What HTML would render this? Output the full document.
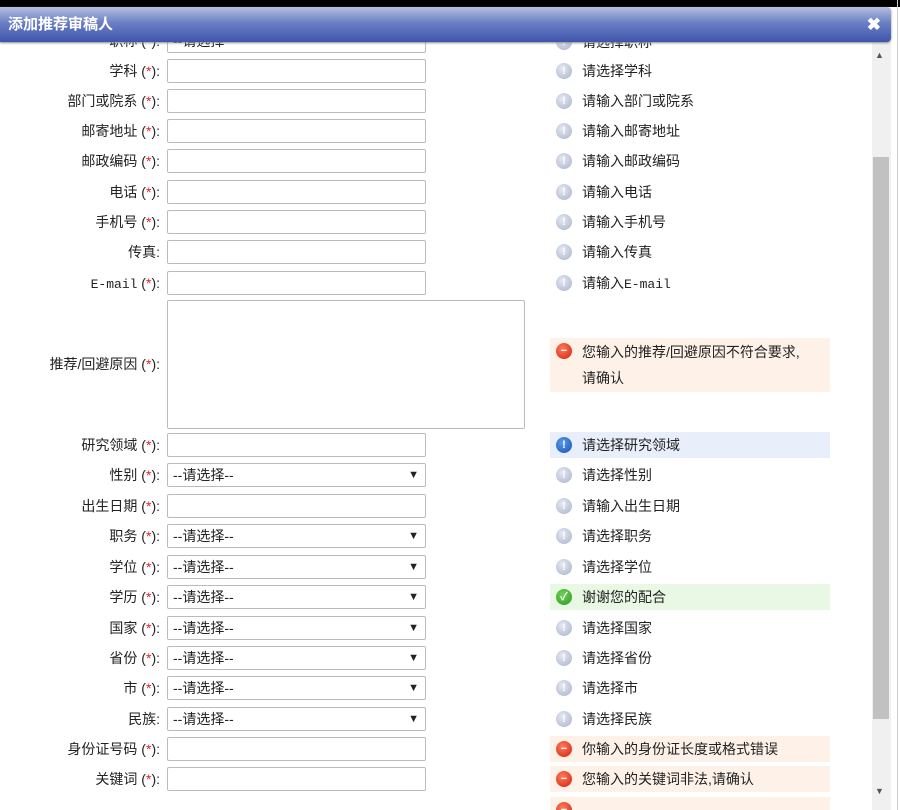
<!DOCTYPE html>
<html><head><meta charset="utf-8"><style>
*{margin:0;padding:0;box-sizing:border-box}
html{width:900px;height:810px;overflow:hidden}
body{width:900px;height:810px;overflow:hidden;background:#fff;font-family:"Liberation Sans","Noto Sans CJK SC",sans-serif;font-size:14px;color:#222;position:relative}
.top{position:absolute;left:0;top:0;width:900px;height:7px;background:#000}
.title{position:absolute;left:0;top:7px;width:891px;height:35px;background:linear-gradient(#b5c0e0,#6b7fc4 45%,#3d55ac);border-radius:0 4px 4px 0;color:#fff;font-weight:bold;font-size:15px;line-height:35px;padding-left:8px;z-index:5;box-shadow:0 1px 2px #888}
.x{position:absolute;right:10px;top:0;font-size:17px;color:#fff}
.rowl{position:absolute;left:0;width:160px;text-align:right;height:20px;line-height:20px;white-space:nowrap}
.rowl i{font-style:normal;color:#d22}
.in{position:absolute;left:167px;width:259px;height:24px;border:1px solid #bbb;border-radius:2px;background:#fff;font-size:14px;line-height:22px;padding-left:5px}
.in b{position:absolute;right:6px;top:0;font-size:11px;font-weight:normal}
.m{position:absolute;left:550px;width:280px;height:26px;line-height:26px;padding-left:32px;white-space:nowrap}
.ic{position:absolute;left:6px;top:5px;width:16px;height:16px;border-radius:50%;background:radial-gradient(circle at 40% 35%,#e4e8f2,#a9b2c8);color:#fff;font-size:11px;line-height:16px;text-align:center;font-weight:bold}
.err{background:#fdf1e8}.err .ic{background:radial-gradient(circle at 40% 35%,#ff7a5a,#d4200c)}
.info{background:#e8effb}.info .ic{background:radial-gradient(circle at 40% 35%,#5a9ae8,#1452b8)}
.ok{background:#e8f8e4}.ok .ic{background:radial-gradient(circle at 40% 35%,#6fd05a,#2a9a1a)}
.sb{position:absolute;left:872px;top:41px;width:19px;height:769px;background:#f0f0f0}
.th{position:absolute;left:873px;top:157px;width:16px;height:562px;background:#c1c1c1}
mono{font-family:"Liberation Mono",monospace;font-size:13px}
</style></head><body>
<div class="top"></div>
<div class="title">添加推荐审稿人<span class="x">✖</span></div>
<div class="sb"></div><div class="th"></div>
<div style="position:absolute;left:875px;top:50px;font-size:9px;color:#555">▲</div>
<div style="position:absolute;left:875px;top:786px;font-size:9px;color:#555">▼</div>
<div style="position:absolute;left:897px;top:0;width:1px;height:810px;background:#ccc"></div>

<div class="rowl" style="top:31px">职称 (<i>*</i>):</div><div class="in" style="top:29px">--请选择</div><div class="m" style="top:29px"><span class="ic">!</span>请选择职称</div>

<div class="rowl" style="top:61px">学科 (<i>*</i>):</div><div class="in" style="top:59px"></div><div class="m" style="top:58px"><span class="ic">!</span>请选择学科</div>
<div class="rowl" style="top:91px">部门或院系 (<i>*</i>):</div><div class="in" style="top:89px"></div><div class="m" style="top:88px"><span class="ic">!</span>请输入部门或院系</div>
<div class="rowl" style="top:121px">邮寄地址 (<i>*</i>):</div><div class="in" style="top:119px"></div><div class="m" style="top:118px"><span class="ic">!</span>请输入邮寄地址</div>
<div class="rowl" style="top:151px">邮政编码 (<i>*</i>):</div><div class="in" style="top:149px"></div><div class="m" style="top:148px"><span class="ic">!</span>请输入邮政编码</div>
<div class="rowl" style="top:182px">电话 (<i>*</i>):</div><div class="in" style="top:180px"></div><div class="m" style="top:179px"><span class="ic">!</span>请输入电话</div>
<div class="rowl" style="top:212px">手机号 (<i>*</i>):</div><div class="in" style="top:210px"></div><div class="m" style="top:209px"><span class="ic">!</span>请输入手机号</div>
<div class="rowl" style="top:242px">传真:</div><div class="in" style="top:240px"></div><div class="m" style="top:239px"><span class="ic">!</span>请输入传真</div>
<div class="rowl" style="top:273px"><mono>E-mail</mono> (<i>*</i>):</div><div class="in" style="top:271px"></div><div class="m" style="top:270px"><span class="ic">!</span>请输入<mono>E-mail</mono></div>

<div class="rowl" style="top:354px">推荐/回避原因 (<i>*</i>):</div>
<div class="in" style="top:300px;width:358px;height:129px"></div>
<div class="m err" style="top:338px;height:54px;line-height:26px;padding-top:1px"><span class="ic">−</span>您输入的推荐/回避原因不符合要求,<br>请确认</div>

<div class="rowl" style="top:435px">研究领域 (<i>*</i>):</div><div class="in" style="top:433px"></div><div class="m info" style="top:432px"><span class="ic">!</span>请选择研究领域</div>
<div class="rowl" style="top:465px">性别 (<i>*</i>):</div><div class="in" style="top:463px">--请选择--<b>▼</b></div><div class="m" style="top:462px"><span class="ic">!</span>请选择性别</div>
<div class="rowl" style="top:496px">出生日期 (<i>*</i>):</div><div class="in" style="top:494px"></div><div class="m" style="top:493px"><span class="ic">!</span>请输入出生日期</div>
<div class="rowl" style="top:526px">职务 (<i>*</i>):</div><div class="in" style="top:524px">--请选择--<b>▼</b></div><div class="m" style="top:523px"><span class="ic">!</span>请选择职务</div>
<div class="rowl" style="top:557px">学位 (<i>*</i>):</div><div class="in" style="top:555px">--请选择--<b>▼</b></div><div class="m" style="top:554px"><span class="ic">!</span>请选择学位</div>
<div class="rowl" style="top:587px">学历 (<i>*</i>):</div><div class="in" style="top:585px">--请选择--<b>▼</b></div><div class="m ok" style="top:584px"><span class="ic">✓</span>谢谢您的配合</div>
<div class="rowl" style="top:618px">国家 (<i>*</i>):</div><div class="in" style="top:616px">--请选择--<b>▼</b></div><div class="m" style="top:615px"><span class="ic">!</span>请选择国家</div>
<div class="rowl" style="top:648px">省份 (<i>*</i>):</div><div class="in" style="top:646px">--请选择--<b>▼</b></div><div class="m" style="top:645px"><span class="ic">!</span>请选择省份</div>
<div class="rowl" style="top:678px">市 (<i>*</i>):</div><div class="in" style="top:676px">--请选择--<b>▼</b></div><div class="m" style="top:675px"><span class="ic">!</span>请选择市</div>
<div class="rowl" style="top:709px">民族:</div><div class="in" style="top:707px">--请选择--<b>▼</b></div><div class="m" style="top:706px"><span class="ic">!</span>请选择民族</div>
<div class="rowl" style="top:739px">身份证号码 (<i>*</i>):</div><div class="in" style="top:737px"></div><div class="m err" style="top:736px"><span class="ic">−</span>你输入的身份证长度或格式错误</div>
<div class="rowl" style="top:769px">关键词 (<i>*</i>):</div><div class="in" style="top:767px"></div><div class="m err" style="top:766px"><span class="ic">−</span>您输入的关键词非法,请确认</div>
<div class="m err" style="top:797px;height:13px;overflow:hidden"><span class="ic">−</span></div>
</body></html>
